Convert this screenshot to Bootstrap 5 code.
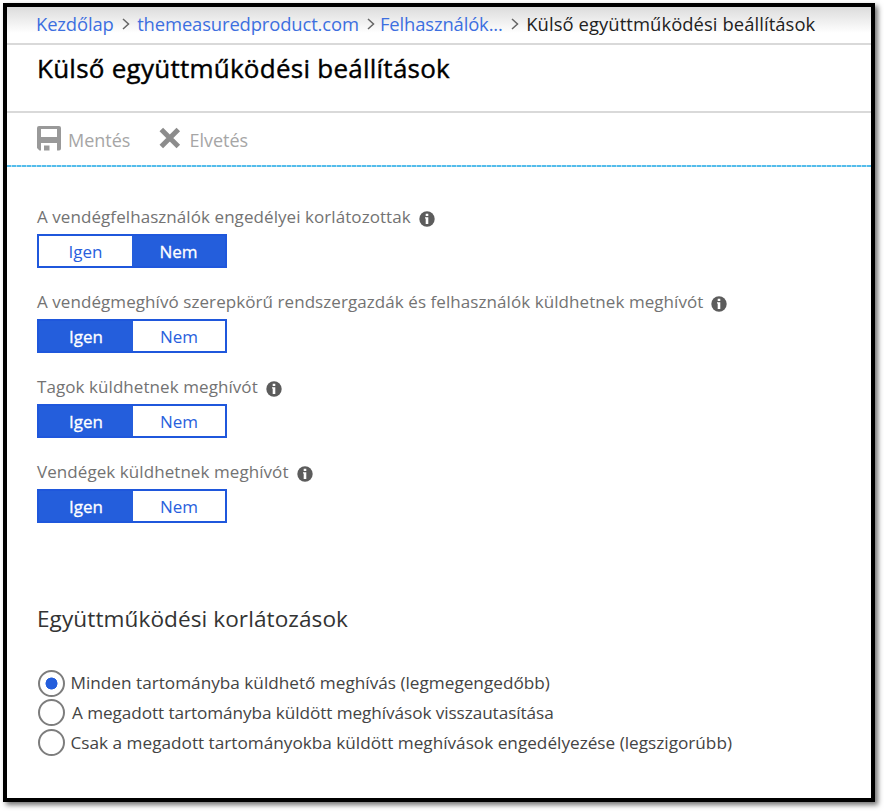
<!DOCTYPE html>
<html lang="hu">
<head>
<meta charset="utf-8">
<meta name="viewport" content="width=device-width, initial-scale=1">
<title>Külső együttműködési beállítások</title>
<link href="https://cdn.jsdelivr.net/npm/bootstrap@5.3.0/dist/css/bootstrap.min.css" rel="stylesheet">
<style>
body{font-family:"Open Sans","Noto Sans",sans-serif;background:#fff;color:#444;height:811px;overflow:hidden}
.window-frame{width:872px;height:799px;margin:3px 0 0 3px;border:4px solid #000;box-shadow:3px 3px 5px rgba(0,0,0,.55);background:#fff}
.crumbs{height:38px;padding-left:29px;border-bottom:2px solid #d9d9d9;background:linear-gradient(#dcdcdc,#fff 26px);font-size:18.4px;line-height:34px;letter-spacing:-.12px;white-space:nowrap}
.crumbs a{color:#3c6fe0;text-decoration:none}
.crumbs .here{color:#222;letter-spacing:.08px}
.crumbs svg{margin:11px 7.5px 0 8px;fill:none;stroke:#666;stroke-width:1.5}
.crumbs .tight{margin-right:5px}
.title-bar{height:68px;padding:7px 0 0 30px;border-bottom:2px solid #d9d9d9}
.title-bar h1{font-size:26px;line-height:32px;color:#000;font-weight:500;letter-spacing:.25px;-webkit-text-stroke:.4px #000;white-space:nowrap}
.tools{height:54px;padding-left:30px;gap:28px;background:repeating-linear-gradient(90deg,#53bdec 0 4px,#b5dcec 4px 5px) left bottom/100% 2px no-repeat}
.tool{font-size:18px;line-height:54px;color:#a6a6a6;background:none;border:0;padding:0}
.tool svg{margin:13px 7px 0 0}
.content{padding:37px 0 0 30px}
.setting{height:85px}
.setting-label{font-size:17px;line-height:26px;height:30px;color:#737373;letter-spacing:.07px;white-space:nowrap}
.setting-label svg{margin-top:7px}
.toggle{width:190px;height:34px;border:2px solid #1f57dc}
.toggle .btn{border:0;border-radius:0;padding:0;font-size:17px;line-height:31px;color:#2860dd;background:#fff}
.toggle .btn.active{color:#fff;background:#245edc;-webkit-text-stroke:.3px #fff}
.toggle .btn.active:first-child{flex:0 0 94px}
.limits{margin-top:60px;font-size:22.6px;line-height:30px;color:#333;font-weight:400;letter-spacing:.07px;margin-bottom:34.5px;white-space:nowrap}
.option{height:29.6px;font-size:17.2px;color:#444;white-space:nowrap;padding-left:1px}
.option .form-check-input{width:27px;height:27px;border:2px solid #7d7d7d;margin:0 5.5px 0 0;background-color:#fff}
.option .form-check-input:checked{background-image:radial-gradient(circle,#245edc 5.7px,transparent 6.3px)}
.option.narrow{letter-spacing:-.08px}
.option.narrow .form-check-input{margin-right:7px}
</style>
</head>
<body>
<svg class="d-none">
  <symbol id="info" viewBox="0 0 16 16"><circle cx="8" cy="8" r="7.700" fill="#5c5c5c"/><path d="M6.700 2.800h2.600v2.200H6.700zM6 6.300h3.300v6.700H6.700V7.500H6z" fill="#fff"/></symbol>
  <symbol id="chevron" viewBox="0 0 8 12"><path d="M1 1l5.500 5L1 11"/></symbol>
</svg>
<div class="window-frame">
  <nav class="crumbs d-flex">
    <a href="#">Kezdőlap</a>
    <svg width="8" height="12"><use href="#chevron"/></svg>
    <a href="#">themeasuredproduct.com</a>
    <svg class="tight" width="8" height="12"><use href="#chevron"/></svg>
    <a href="#">Felhasználók...</a>
    <svg width="8" height="12"><use href="#chevron"/></svg>
    <span class="here">Külső együttműködési beállítások</span>
  </nav>
  <header class="title-bar"><h1 class="m-0">Külső együttműködési beállítások</h1></header>
  <div class="tools d-flex">
    <button class="tool d-flex"><svg width="24" height="25" viewBox="0 0 24 25"><path fill="#999" fill-rule="evenodd" d="M2 0h20a2 2 0 0 1 2 2v20.500a2 2 0 0 1-2 2h-2V17H4v7.500H2.500L0 22V2a2 2 0 0 1 2-2zM4 3v8h16V3zM7 19.500h5.500v5H7z"/></svg>Mentés</button>
    <button class="tool d-flex"><svg width="24" height="24" viewBox="-.500 -.500 24 24"><path d="M2.800 3l17 17M19.800 3l-17 17" stroke="#8c8c8c" stroke-width="5"/></svg>Elvetés</button>
  </div>
  <main class="content">
    <section class="setting">
      <div class="setting-label d-flex">A vendégfelhasználók engedélyei korlátozottak<svg class="ms-2" width="16" height="16"><use href="#info"/></svg></div>
      <div class="toggle d-flex"><button class="btn w-50">Igen</button><button class="btn w-50 active">Nem</button></div>
    </section>
    <section class="setting">
      <div class="setting-label d-flex">A vendégmeghívó szerepkörű rendszergazdák és felhasználók küldhetnek meghívót<svg class="ms-2" width="16" height="16"><use href="#info"/></svg></div>
      <div class="toggle d-flex"><button class="btn w-50 active">Igen</button><button class="btn w-50">Nem</button></div>
    </section>
    <section class="setting">
      <div class="setting-label d-flex">Tagok küldhetnek meghívót<svg class="ms-2" width="16" height="16"><use href="#info"/></svg></div>
      <div class="toggle d-flex"><button class="btn w-50 active">Igen</button><button class="btn w-50">Nem</button></div>
    </section>
    <section class="setting">
      <div class="setting-label d-flex">Vendégek küldhetnek meghívót<svg class="ms-2" width="16" height="16"><use href="#info"/></svg></div>
      <div class="toggle d-flex"><button class="btn w-50 active">Igen</button><button class="btn w-50">Nem</button></div>
    </section>
    <h2 class="limits">Együttműködési korlátozások</h2>
    <label class="option d-flex align-items-center"><input class="form-check-input" type="radio" name="limit" checked>Minden tartományba küldhető meghívás (legmegengedőbb)</label>
    <label class="option narrow d-flex align-items-center"><input class="form-check-input" type="radio" name="limit">A megadott tartományba küldött meghívások visszautasítása</label>
    <label class="option d-flex align-items-center"><input class="form-check-input" type="radio" name="limit">Csak a megadott tartományokba küldött meghívások engedélyezése (legszigorúbb)</label>
  </main>
</div>
<script src="https://cdn.jsdelivr.net/npm/bootstrap@5.3.0/dist/js/bootstrap.bundle.min.js"></script>
</body>
</html>
